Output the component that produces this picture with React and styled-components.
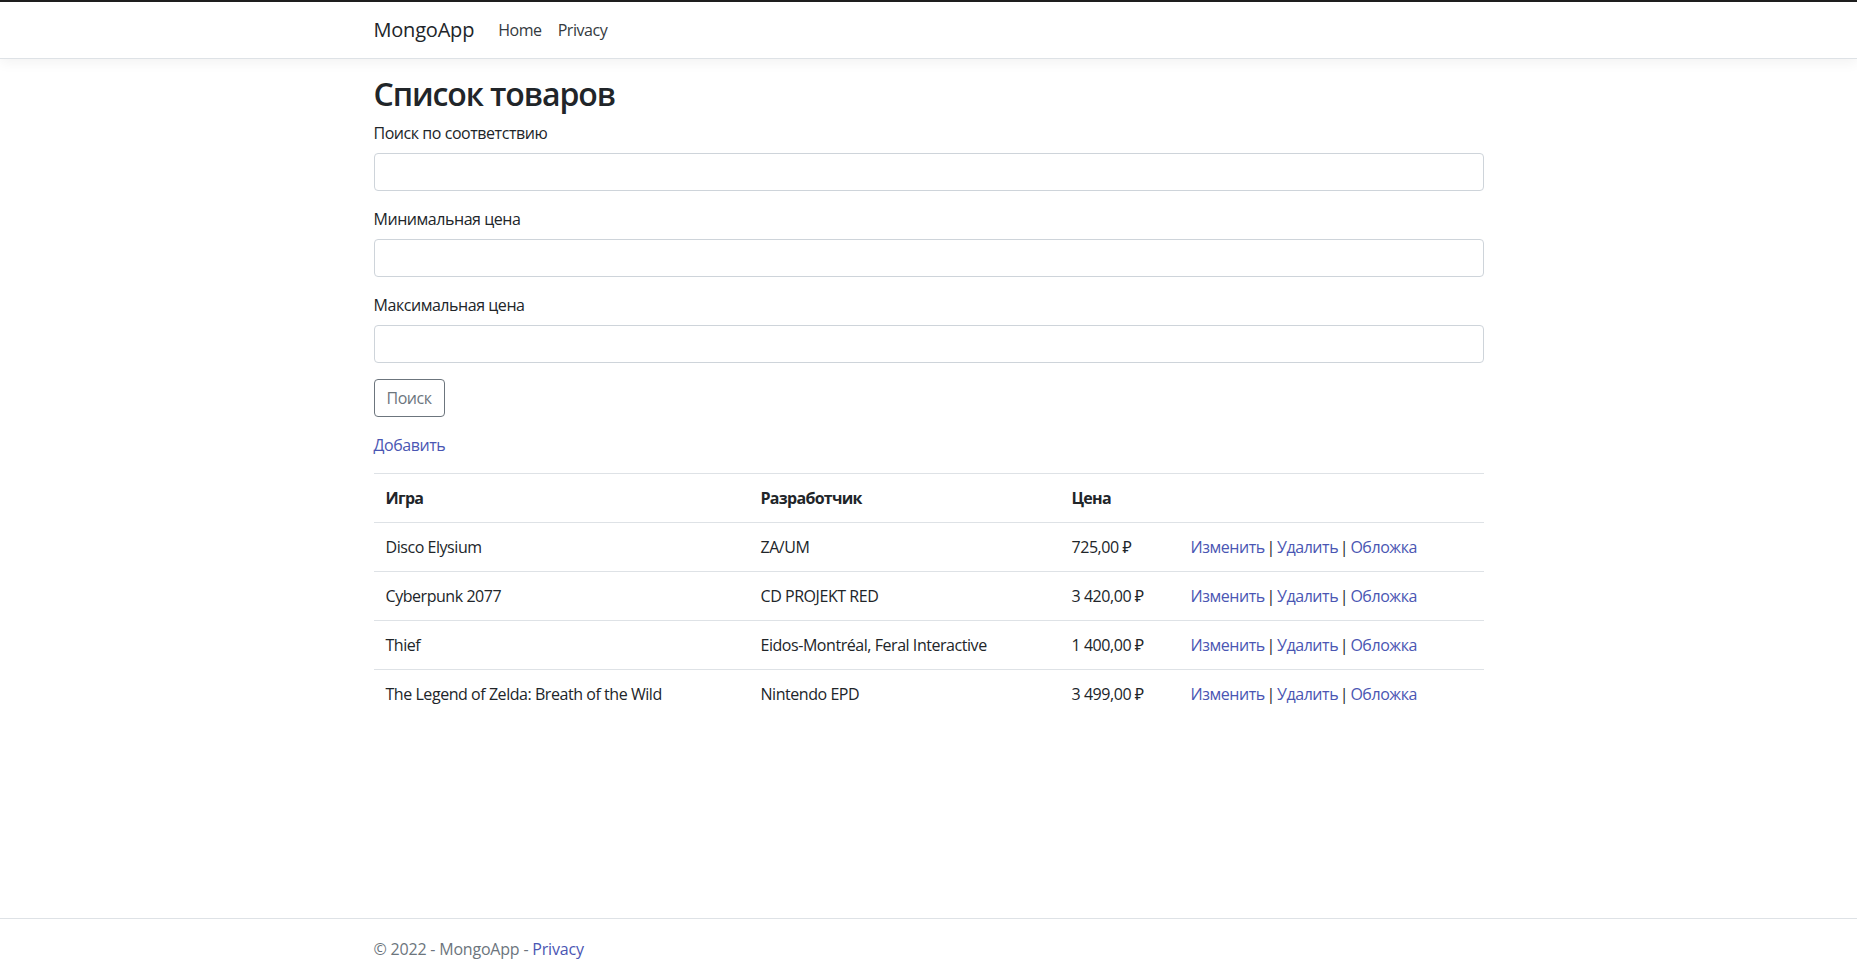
import React from "react";
import styled, { createGlobalStyle } from "styled-components";

const GlobalStyle = createGlobalStyle`
  *, *::before, *::after { box-sizing: border-box; }
  html, body { margin: 0; padding: 0; }
  body {
    font-family: "Open Sans", "Noto Sans", "DejaVu Sans", sans-serif;
    font-size: 16px;
    line-height: 1.5;
    letter-spacing: -0.45px;
    color: #212529;
    background: #ffffff;
  }
`;

const Page = styled.div`
  display: flex;
  flex-direction: column;
  min-height: 100vh;
`;

const Header = styled.header`
  border-top: 2px solid #1f1f1f;
`;

const Navbar = styled.nav`
  background: #ffffff;
  border-bottom: 1px solid #dee2e6;
  box-shadow: 0 0.25rem 0.75rem rgba(0, 0, 0, 0.05);
  margin-bottom: 16px;
  padding: 8px 0;
`;

const Container = styled.div`
  width: 100%;
  max-width: 1140px;
  padding: 0 15px;
  margin: 0 auto;
`;

const NavInner = styled(Container)`
  display: flex;
  align-items: center;
`;

const Brand = styled.a`
  font-size: 20px;
  line-height: 30px;
  letter-spacing: -0.2px;
  padding: 5px 0;
  margin-right: 16px;
  color: #212529;
  text-decoration: none;
`;

const NavList = styled.ul`
  display: flex;
  list-style: none;
  margin: 0;
  padding: 0;
`;

const NavLink = styled.a`
  display: block;
  padding: 8px;
  color: #343a40;
  text-decoration: none;
`;

const Main = styled.main`
  flex: 1;
  padding-bottom: 16px;
`;

const Title = styled.h1`
  font-size: 32px;
  font-weight: 600;
  line-height: 1.2;
  letter-spacing: -1.1px;
  margin: 0 0 8px;
`;

const FormGroup = styled.div`
  margin-bottom: 16px;
`;

const Label = styled.label`
  display: inline-block;
  margin-bottom: 8px;
`;

const Input = styled.input`
  display: block;
  width: 100%;
  height: 38px;
  padding: 6px 12px;
  font-family: inherit;
  font-size: 16px;
  color: #495057;
  background: #ffffff;
  border: 1px solid #ced4da;
  border-radius: 4px;
  outline: none;
`;

const Button = styled.button`
  display: inline-block;
  padding: 6px 12px;
  font-family: inherit;
  font-size: 16px;
  line-height: 1.5;
  letter-spacing: -0.45px;
  color: #6c757d;
  background: transparent;
  border: 1px solid #6c757d;
  border-radius: 4px;
  cursor: pointer;
`;

const Para = styled.p`
  margin: 0 0 16px;
`;

const Link = styled.a`
  color: #4a56b3;
  text-decoration: none;
`;

const Table = styled.table`
  width: 100%;
  border-collapse: collapse;
  table-layout: fixed;
  margin-bottom: 16px;
`;

const Col = styled.col`
  width: ${(p) => p.$w}px;
`;

const Th = styled.th`
  padding: 12px;
  border-top: 1px solid #dee2e6;
  text-align: left;
  vertical-align: bottom;
  font-weight: 700;
  letter-spacing: -0.7px;
`;

const Td = styled.td`
  padding: 12px;
  border-top: 1px solid #dee2e6;
  vertical-align: top;
  white-space: nowrap;
`;

const Sep = styled.span`
  margin: 0 -2px;
  letter-spacing: 0;
  color: #212529;
`;

const Footer = styled.footer`
  border-top: 1px solid #dee2e6;
  color: #6c757d;
  line-height: 60px;
  white-space: nowrap;
  letter-spacing: -0.2px;
`;

const games = [
  { name: "Disco Elysium", dev: "ZA/UM", price: "725,00\u00a0₽" },
  { name: "Cyberpunk 2077", dev: "CD PROJEKT RED", price: "3\u00a0420,00\u00a0₽" },
  { name: "Thief", dev: "Eidos-Montréal, Feral Interactive", price: "1\u00a0400,00\u00a0₽" },
  { name: "The Legend of Zelda: Breath of the Wild", dev: "Nintendo EPD", price: "3\u00a0499,00\u00a0₽" },
];

export default function App() {
  return (
    <Page>
      <GlobalStyle />
      <Header>
        <Navbar>
          <NavInner>
            <Brand href="#">MongoApp</Brand>
            <NavList>
              <li><NavLink href="#">Home</NavLink></li>
              <li><NavLink href="#">Privacy</NavLink></li>
            </NavList>
          </NavInner>
        </Navbar>
      </Header>
      <Main>
        <Container>
          <Title>Список товаров</Title>
          <form onSubmit={(e) => e.preventDefault()}>
            <FormGroup>
              <Label>Поиск по соответствию</Label>
              <Input type="text" />
            </FormGroup>
            <FormGroup>
              <Label>Минимальная цена</Label>
              <Input type="text" />
            </FormGroup>
            <FormGroup>
              <Label>Максимальная цена</Label>
              <Input type="text" />
            </FormGroup>
            <FormGroup>
              <Button type="submit">Поиск</Button>
            </FormGroup>
          </form>
          <Para>
            <Link href="#">Добавить</Link>
          </Para>
          <Table>
            <colgroup>
              <Col $w={375} />
              <Col $w={311} />
              <Col $w={119} />
              <Col $w={305} />
            </colgroup>
            <thead>
              <tr>
                <Th>Игра</Th>
                <Th>Разработчик</Th>
                <Th>Цена</Th>
                <Th></Th>
              </tr>
            </thead>
            <tbody>
              {games.map((g) => (
                <tr key={g.name}>
                  <Td>{g.name}</Td>
                  <Td>{g.dev}</Td>
                  <Td>{g.price}</Td>
                  <Td>
                    <Link href="#">Изменить</Link> <Sep>|</Sep>{" "}
                    <Link href="#">Удалить</Link> <Sep>|</Sep>{" "}
                    <Link href="#">Обложка</Link>
                  </Td>
                </tr>
              ))}
            </tbody>
          </Table>
        </Container>
      </Main>
      <Footer>
        <Container>
          © 2022 - MongoApp - <Link href="#">Privacy</Link>
        </Container>
      </Footer>
    </Page>
  );
}
